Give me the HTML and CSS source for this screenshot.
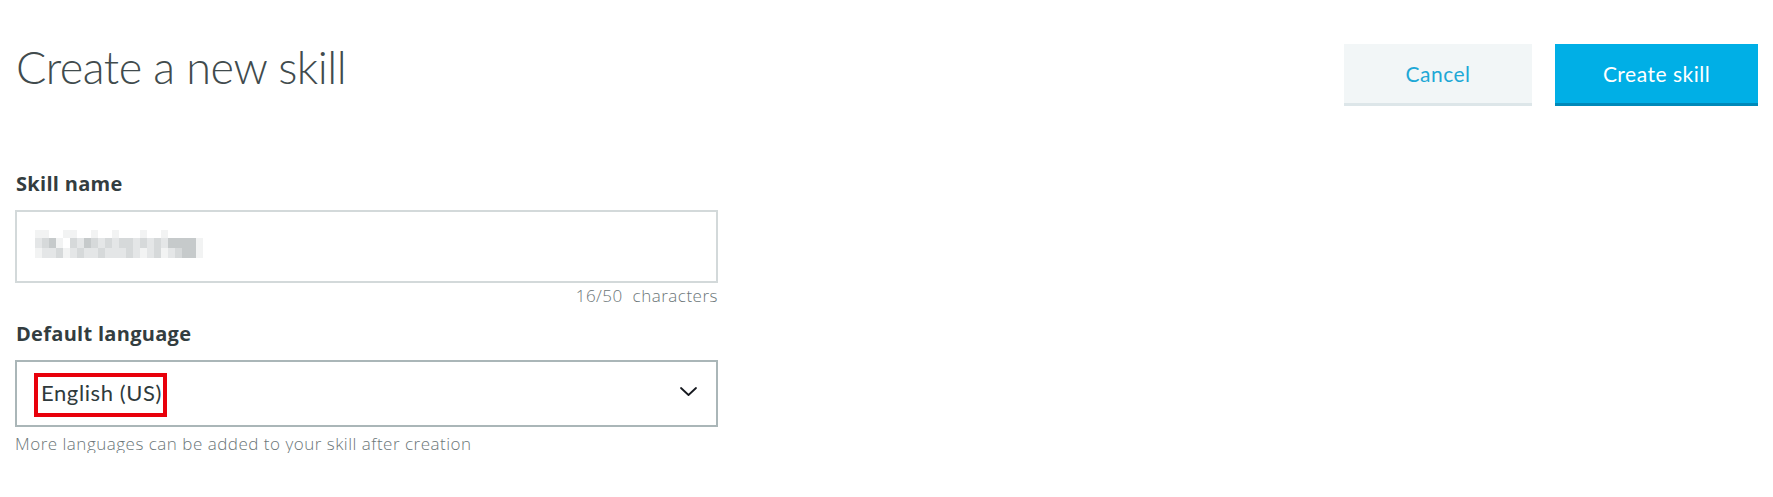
FILE: index.html
```html
<!DOCTYPE html>
<html lang="en">
<head>
<meta charset="utf-8">
<title>Create a new skill</title>
<link rel="stylesheet" href="styles.css">
</head>
<body>
<div class="page">
  <header class="header">
    <h1 class="title">Create a new skill</h1>
    <div class="actions">
      <button class="btn btn-secondary" type="button">Cancel</button>
      <button class="btn btn-primary" type="button">Create skill</button>
    </div>
  </header>

  <section class="field">
    <label class="label">Skill name</label>
    <div class="input">
      <div class="mosaic">
        <span class="c1"></span><span class="c1"></span><span class="c0"></span><span class="c0"></span><span class="c1"></span><span class="c1"></span><span class="c0"></span><span class="c0"></span><span class="c1"></span><span class="c0"></span><span class="c0"></span><span class="c1"></span><span class="c0"></span><span class="c0"></span><span class="c0"></span><span class="c1"></span><span class="c0"></span><span class="c0"></span><span class="c1"></span><span class="c0"></span><span class="c0"></span><span class="c0"></span><span class="c0"></span><span class="c0"></span>
        <span class="c2"></span><span class="c3"></span><span class="c4"></span><span class="c1"></span><span class="c0"></span><span class="c3"></span><span class="c2"></span><span class="c4"></span><span class="c3"></span><span class="c2"></span><span class="c3"></span><span class="c2"></span><span class="c3"></span><span class="c3"></span><span class="c2"></span><span class="c3"></span><span class="c2"></span><span class="c3"></span><span class="c2"></span><span class="c4"></span><span class="c4"></span><span class="c4"></span><span class="c4"></span><span class="c1"></span>
        <span class="c1"></span><span class="c2"></span><span class="c2"></span><span class="c3"></span><span class="c1"></span><span class="c2"></span><span class="c3"></span><span class="c2"></span><span class="c2"></span><span class="c3"></span><span class="c2"></span><span class="c2"></span><span class="c2"></span><span class="c3"></span><span class="c2"></span><span class="c1"></span><span class="c2"></span><span class="c3"></span><span class="c1"></span><span class="c2"></span><span class="c3"></span><span class="c4"></span><span class="c4"></span><span class="c1"></span>
      </div>
    </div>
    <div class="counter">16/50&nbsp; characters</div>
  </section>

  <section class="field field-lang">
    <label class="label">Default language</label>
    <div class="select">
      <span class="highlight">English (US)</span>
      <svg class="chevron" width="17" height="9" viewBox="0 0 17 9" aria-hidden="true">
        <path d="M1 1 L8.5 8 L16 1" fill="none" stroke="#16191f" stroke-width="1.8" stroke-linecap="round" stroke-linejoin="round"/>
      </svg>
    </div>
    <div class="help">More languages can be added to your skill after creation</div>
  </section>
</div>
</body>
</html>
```

FILE: styles.css
```css
* {
  box-sizing: border-box;
}

html, body {
  margin: 0;
  padding: 0;
  background: #ffffff;
}

body {
  font-family: Lato, "Liberation Sans", sans-serif;
  color: #3c4648;
}

.page {
  padding: 0 15px;
}

.header {
  display: flex;
  justify-content: space-between;
  align-items: flex-start;
  padding-top: 40px;
}

.title {
  margin: 0;
  font-size: 45px;
  font-weight: 300;
  line-height: 54px;
  letter-spacing: -0.5px;
  color: #414b4d;
  padding-left: 1px;
}

.actions {
  display: flex;
  gap: 23px;
  margin-top: 4px;
}

.btn {
  height: 62px;
  border: 0;
  border-bottom: 3px solid transparent;
  font-family: Lato, "Liberation Sans", sans-serif;
  font-size: 21px;
  font-weight: 400;
  letter-spacing: 0.5px;
  display: flex;
  align-items: center;
  justify-content: center;
  padding: 0;
  cursor: pointer;
}

.btn-secondary {
  width: 188px;
  background: #f2f6f7;
  border-bottom-color: #dde6e9;
  color: #1ea8d6;
}

.btn-primary {
  width: 203px;
  background: #00afe6;
  border-bottom-color: #0089b9;
  color: #ffffff;
}

.field {
  display: flex;
  flex-direction: column;
  width: 703px;
  margin-top: 68px;
}

.field-lang {
  margin-top: 19px;
}

.label {
  font-family: "Open Sans", "Liberation Sans", sans-serif;
  font-size: 20px;
  font-weight: 700;
  line-height: 20px;
  letter-spacing: 0.3px;
  color: #333d40;
  margin-bottom: 16px;
  padding-left: 1px;
}

.input {
  height: 73px;
  border: 2px solid #d3d9da;
  padding: 18px 0 0 18px;
}

.mosaic {
  display: grid;
  grid-template-columns: repeat(24, 7px);
  grid-template-rows: 8px 10px 10px;
}

.mosaic span {
  display: block;
}

.c0 { background: #ffffff; }
.c1 { background: #f2f3f3; }
.c2 { background: #e4e6e7; }
.c3 { background: #d6d9da; }
.c4 { background: #c6cacb; }

.counter {
  align-self: flex-end;
  margin-top: 3px;
  font-family: "Open Sans", "Liberation Sans", sans-serif;
  font-size: 17px;
  font-weight: 300;
  line-height: 19px;
  letter-spacing: 0.5px;
  color: #6b7678;
}

.select {
  height: 67px;
  border: 2px solid #aab6b8;
  display: flex;
  align-items: flex-start;
  padding: 11px 19px 0 17px;
}

.highlight {
  display: inline-block;
  border: 4px solid #e8000b;
  padding: 3px 1px 7px 3px;
  font-size: 22px;
  line-height: 26px;
  letter-spacing: 0.6px;
  color: #2f3a3c;
}

.chevron {
  display: block;
  margin-left: auto;
  margin-top: 14px;
}

.help {
  margin-top: 7px;
  font-family: "Open Sans", "Liberation Sans", sans-serif;
  font-size: 17px;
  font-weight: 300;
  line-height: 19px;
  letter-spacing: 0.5px;
  color: #6b7678;
}
```
